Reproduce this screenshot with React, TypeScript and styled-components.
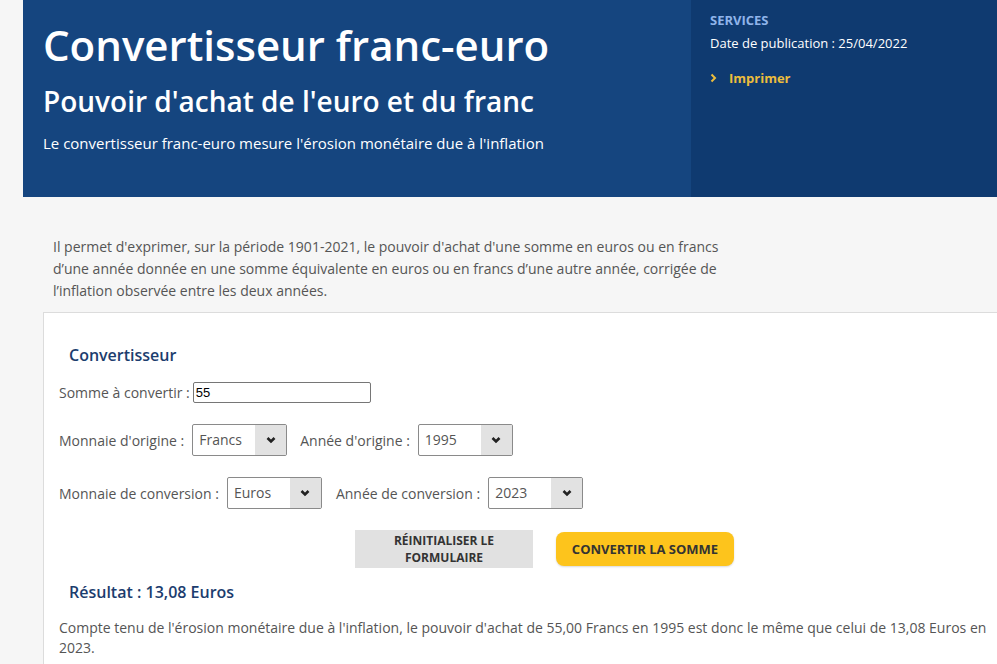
import React from "react";
import styled, { createGlobalStyle } from "styled-components";

const Global = createGlobalStyle`
  html, body { margin: 0; padding: 0; }
  body {
    background: #f6f6f6;
    font-family: "Open Sans", "Noto Sans", Arial, sans-serif;
    overflow: hidden;
  }
`;

const Page = styled.div`
  margin-left: 23px;
  width: 1010px;
`;

const Header = styled.header`
  display: flex;
  height: 197px;
`;

const HeaderMain = styled.div`
  width: 648px;
  background: #15457f;
  padding: 18px 0 0 20px;
  color: #fff;
`;

const Title = styled.h1`
  margin: 0;
  font-size: 42px;
  font-weight: 600;
  line-height: 54px;
`;

const Subtitle = styled.h2`
  margin: 11px 0 0;
  font-size: 28px;
  font-weight: 600;
  line-height: 36px;
`;

const Lead = styled.p`
  margin: 13px 0 0;
  font-size: 15px;
  line-height: 22px;
`;

const Aside = styled.aside`
  flex: 1;
  background: #0f3a70;
  padding: 11px 0 0 19px;
  color: #fff;
`;

const AsideTitle = styled.div`
  font-size: 13px;
  font-weight: 700;
  color: #8fb4ea;
  line-height: 18px;
`;

const AsideText = styled.div`
  margin-top: 5px;
  font-size: 13px;
  line-height: 18px;
`;

const PrintLink = styled.a`
  display: flex;
  align-items: center;
  gap: 12px;
  margin-top: 17px;
  font-size: 13px;
  font-weight: 700;
  color: #ecbd3d;
  line-height: 18px;
`;

const Content = styled.div`
  padding: 39px 0 0 20px;
`;

const Intro = styled.p`
  margin: 0 0 10px 10px;
  width: 672px;
  font-size: 14px;
  line-height: 22px;
  color: #555;
`;

const Card = styled.section`
  background: #fff;
  border-top: 1px solid #dcdcdc;
  border-left: 1px solid #dcdcdc;
  padding: 31px 0 20px 15px;
  min-height: 400px;
`;

const CardTitle = styled.h3`
  margin: 0 0 16px 10px;
  font-size: 16px;
  font-weight: 600;
  color: #1c3d6e;
  line-height: 22px;
`;

const Row = styled.div<{ $mt?: number }>`
  display: flex;
  align-items: center;
  margin-top: ${(p) => p.$mt ?? 0}px;
`;

const Label = styled.label<{ $ml?: number; $mr?: number }>`
  font-size: 14px;
  color: #555;
  margin-left: ${(p) => p.$ml ?? 0}px;
  margin-right: ${(p) => p.$mr ?? 8}px;
  white-space: nowrap;
`;

const TextInput = styled.div`
  width: 172px;
  height: 19px;
  border: 1px solid #767676;
  border-radius: 2px;
  padding: 0 2px;
  font-family: Arial, "Liberation Sans", sans-serif;
  font-size: 13px;
  line-height: 19px;
  color: #000;
`;

const Select = styled.div`
  display: flex;
  width: 93px;
  height: 30px;
  border: 1px solid #8a8a8a;
  border-radius: 2px;
  overflow: hidden;
  background: #fff;
`;

const SelectValue = styled.span`
  flex: 1;
  padding-left: 6px;
  font-size: 14px;
  line-height: 30px;
  color: #555;
`;

const SelectArrow = styled.span`
  width: 31px;
  background: #e2e2e2;
  display: flex;
  align-items: center;
  justify-content: center;
`;

const Buttons = styled.div`
  display: flex;
  align-items: center;
  gap: 23px;
  margin: 21px 0 0 296px;
`;

const ResetButton = styled.button`
  width: 178px;
  height: 38px;
  border: none;
  background: #e1e1e1;
  font-family: inherit;
  font-size: 12px;
  font-weight: 700;
  line-height: 17px;
  color: #333;
  padding: 0;
`;

const SubmitButton = styled.button`
  width: 178px;
  height: 34px;
  border: none;
  border-radius: 8px;
  background: #fdc41c;
  box-shadow: 0 1px 2px rgba(0, 0, 0, 0.15);
  font-family: inherit;
  font-size: 13px;
  font-weight: 700;
  color: #333;
  padding: 0;
`;

const Result = styled.h3`
  margin: 13px 0 0 10px;
  font-size: 16px;
  font-weight: 600;
  color: #1c3d6e;
  line-height: 22px;
`;

const ResultText = styled.p`
  margin: 15px 0 0;
  width: 935px;
  font-size: 14px;
  line-height: 20px;
  color: #555;
`;

const Chevron = () => (
  <svg width="10" height="8" viewBox="0 0 10 8">
    <path d="M1.5 2 L5 5.5 L8.5 2" fill="none" stroke="#222" strokeWidth="2.6" />
  </svg>
);

const SmallChevron = () => (
  <svg width="7" height="10" viewBox="0 0 7 10">
    <path d="M1.5 1.5 L5 5 L1.5 8.5" fill="none" stroke="#ecbd3d" strokeWidth="2" />
  </svg>
);

const SelectBox = ({ value }: { value: string }) => (
  <Select>
    <SelectValue>{value}</SelectValue>
    <SelectArrow>
      <Chevron />
    </SelectArrow>
  </Select>
);

export default function App() {
  return (
    <>
      <Global />
      <Page>
        <Header>
          <HeaderMain>
            <Title>Convertisseur franc-euro</Title>
            <Subtitle>Pouvoir d'achat de l'euro et du franc</Subtitle>
            <Lead>Le convertisseur franc-euro mesure l'érosion monétaire due à l'inflation</Lead>
          </HeaderMain>
          <Aside>
            <AsideTitle>SERVICES</AsideTitle>
            <AsideText>Date de publication : 25/04/2022</AsideText>
            <PrintLink>
              <SmallChevron />
              Imprimer
            </PrintLink>
          </Aside>
        </Header>
        <Content>
          <Intro>
            Il permet d'exprimer, sur la période 1901-2021, le pouvoir d'achat d'une somme en euros ou en francs
            d’une année donnée en une somme équivalente en euros ou en francs d’une autre année, corrigée de
            l’inflation observée entre les deux années.
          </Intro>
          <Card>
            <CardTitle>Convertisseur</CardTitle>
            <Row>
              <Label $mr={3}>Somme à convertir :</Label>
              <TextInput>55</TextInput>
            </Row>
            <Row $mt={21}>
              <Label>Monnaie d'origine :</Label>
              <SelectBox value="Francs" />
              <Label $ml={13}>Année d'origine :</Label>
              <SelectBox value="1995" />
            </Row>
            <Row $mt={21}>
              <Label>Monnaie de conversion :</Label>
              <SelectBox value="Euros" />
              <Label $ml={14}>Année de conversion :</Label>
              <SelectBox value="2023" />
            </Row>
            <Buttons>
              <ResetButton>
                RÉINITIALISER LE
                <br />
                FORMULAIRE
              </ResetButton>
              <SubmitButton>CONVERTIR LA SOMME</SubmitButton>
            </Buttons>
            <Result>Résultat : 13,08 Euros</Result>
            <ResultText>
              Compte tenu de l'érosion monétaire due à l'inflation, le pouvoir d'achat de 55,00 Francs en 1995 est
              donc le même que celui de 13,08 Euros en 2023.
            </ResultText>
          </Card>
        </Content>
      </Page>
    </>
  );
}
